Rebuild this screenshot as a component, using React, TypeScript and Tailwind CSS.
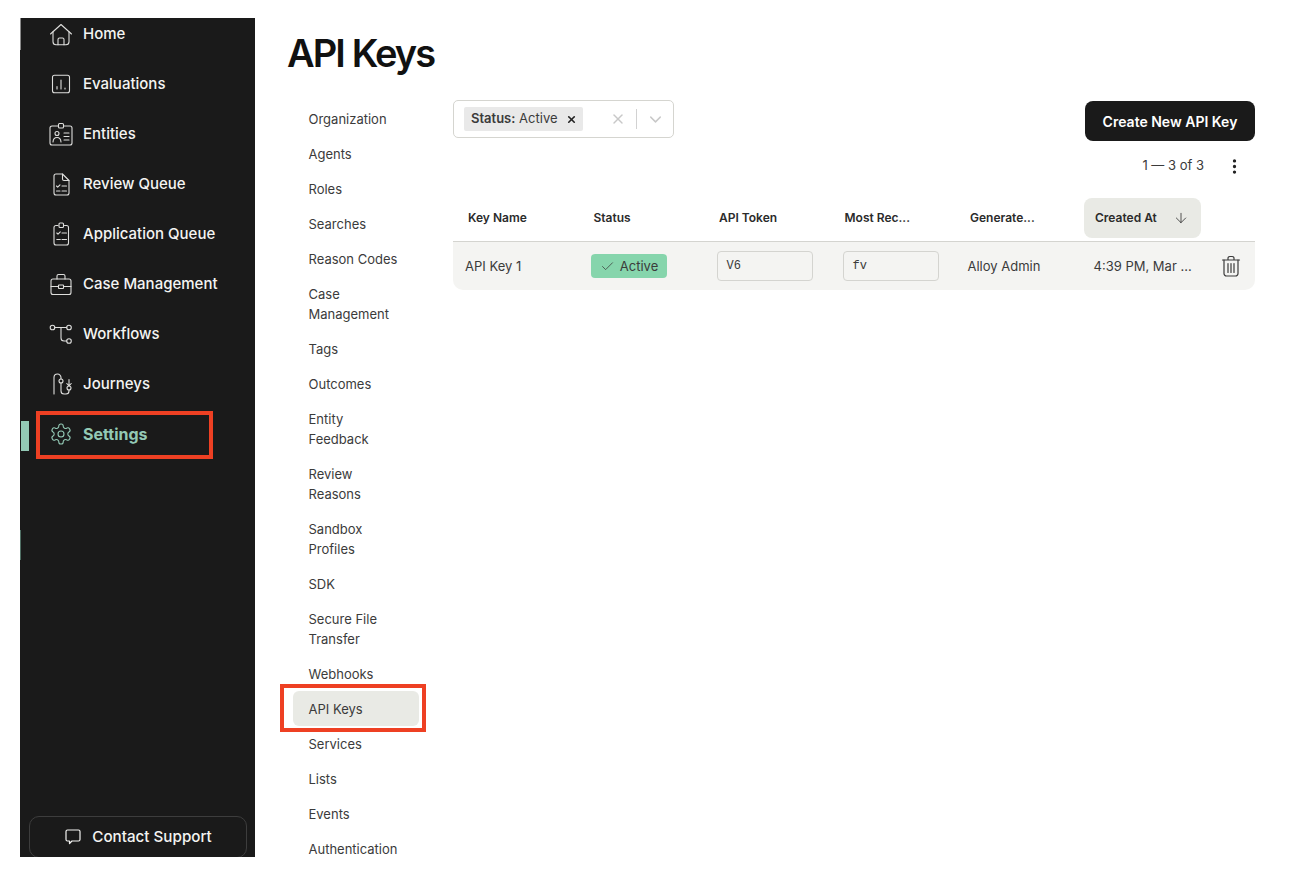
import React from 'react'
import { ArrowDown, Check, ChevronDown, MoreVertical, X } from 'lucide-react'

const Svg: React.FC<{ children: React.ReactNode; size?: number }> = ({ children, size = 24 }) => (
  <svg width={size} height={size} viewBox="0 0 24 24" fill="none" stroke="currentColor" strokeWidth={1.1} strokeLinecap="round" strokeLinejoin="round" className="shrink-0 opacity-90">
    {children}
  </svg>
)

const HomeIcon = () => (
  <Svg>
    <path d="M1.5 12 12 2.5 22.5 12" />
    <path d="M4 9.8v10a3 3 0 0 0 3 3h10a3 3 0 0 0 3-3v-10" />
    <path d="M9 22.8v-5.3a1.5 1.5 0 0 1 1.5-1.5h3a1.5 1.5 0 0 1 1.5 1.5v5.3" />
  </Svg>
)

const EvaluationsIcon = () => (
  <Svg>
    <rect x="3.5" y="3.2" width="17" height="17.6" rx="2" />
    <path d="M8 17v-2.5M12 17V8M16 17v-1" />
  </Svg>
)

const EntitiesIcon = () => (
  <Svg>
    <path d="M9 4H3a2 2 0 0 0-2 2v15a2 2 0 0 0 2 2h18a2 2 0 0 0 2-2V6a2 2 0 0 0-2-2h-6" />
    <rect x="9.5" y="1.5" width="5" height="4.5" rx="1" />
    <circle cx="8" cy="11.5" r="2" />
    <path d="M4 20c.2-3 1.8-4.5 4-4.5s3.8 1.500 4 4.500M15 11h5M15 14.500h5M15 18h5" />
  </Svg>
)

const ReviewIcon = () => (
  <Svg>
    <path d="M13.500 2H7a2 2 0 0 0-2 2v17a2 2 0 0 0 2 2h11a2 2 0 0 0 2-2V8.500z" />
    <path d="M13.500 2v5a1.500 1.500 0 0 0 1.500 1.500h5" />
    <path d="m7.500 14 1.200 1.200 2.300-2.400M13 14h4.500M7.500 19h3.500M13 19h4.500" />
  </Svg>
)

const ApplicationIcon = () => (
  <Svg>
    <path d="M9 3.500H7a2 2 0 0 0-2 2V21a2 2 0 0 0 2 2h10.500a2 2 0 0 0 2-2V5.500a2 2 0 0 0-2-2H15.500" />
    <rect x="10" y="1" width="4.500" height="4.500" rx="1" />
    <path d="m7.800 11 1.200 1.200 2.300-2.400M13 11h4.500M7.800 17.500h3.500M13 17.500h4.500" />
  </Svg>
)

const CaseIcon = () => (
  <Svg>
    <rect x="2" y="7" width="20" height="15.500" rx="2" />
    <path d="M8 7V4a1.500 1.500 0 0 1 1.500-1.500h5A1.500 1.500 0 0 1 16 4v3M2 14.500h7.500M14.500 14.500H22" />
    <rect x="9.500" y="13" width="5" height="3.500" rx=".5" />
  </Svg>
)

const WorkflowsIcon = () => (
  <Svg>
    <circle cx="3.500" cy="5.500" r="2.300" />
    <circle cx="20" cy="5.500" r="2.300" />
    <circle cx="20" cy="19" r="2.300" />
    <path d="M5.800 5.500h11.900M12 5.500V16a3 3 0 0 0 3 3h2.700" />
  </Svg>
)

const JourneysIcon = () => (
  <Svg>
    <path d="M5 22V5.500a3.500 3.500 0 0 1 7 0v1.500M12 11v8a3 3 0 0 0 3 3h2a3 3 0 0 0 3-3v-1" />
    <circle cx="12" cy="9" r="2" />
    <circle cx="20" cy="16" r="2" />
    <path d="M20 14V7.500M17.800 11.500 20 14l2.200-2.500" />
  </Svg>
)

const SettingsIcon = () => (
  <svg width="24" height="24" viewBox="0 0 24 24" fill="none" stroke="currentColor" strokeWidth={1.100} strokeLinecap="round" strokeLinejoin="round" className="shrink-0">
    <path d="M12.220 2h-.44a2 2 0 0 0-2 2v.180a2 2 0 0 1-1 1.730l-.43.250a2 2 0 0 1-2 0l-.150-.080a2 2 0 0 0-2.730.730l-.220.380a2 2 0 0 0 .730 2.730l.150.100a2 2 0 0 1 1 1.720v.510a2 2 0 0 1-1 1.740l-.150.090a2 2 0 0 0-.730 2.730l.220.380a2 2 0 0 0 2.730.730l.150-.080a2 2 0 0 1 2 0l.430.250a2 2 0 0 1 1 1.730V20a2 2 0 0 0 2 2h.440a2 2 0 0 0 2-2v-.180a2 2 0 0 1 1-1.730l.430-.250a2 2 0 0 1 2 0l.150.080a2 2 0 0 0 2.730-.730l.220-.390a2 2 0 0 0-.730-2.730l-.150-.080a2 2 0 0 1-1-1.740v-.500a2 2 0 0 1 1-1.740l.150-.090a2 2 0 0 0 .730-2.730l-.220-.380a2 2 0 0 0-2.730-.730l-.150.080a2 2 0 0 1-2 0l-.430-.250a2 2 0 0 1-1-1.730V4a2 2 0 0 0-2-2z" />
    <circle cx="12" cy="12" r="3" />
  </svg>
)

const TrashIcon = () => (
  <svg width="20" height="22" viewBox="0 0 20 22" fill="none" stroke="currentColor" strokeWidth={1.200} strokeLinecap="round" strokeLinejoin="round">
    <path d="M1.500 5h17M7 5V3.200A1.700 1.700 0 0 1 8.700 1.500h2.600A1.700 1.700 0 0 1 13 3.200V5" />
    <path d="M3 5v13.500A2.500 2.500 0 0 0 5.500 21h9a2.500 2.500 0 0 0 2.500-2.500V5" />
    <path d="M7 8.500v9M10 8.500v9M13 8.500v9" />
  </svg>
)

const navItems = [
  { label: 'Home', icon: <HomeIcon /> },
  { label: 'Evaluations', icon: <EvaluationsIcon /> },
  { label: 'Entities', icon: <EntitiesIcon /> },
  { label: 'Review Queue', icon: <ReviewIcon /> },
  { label: 'Application Queue', icon: <ApplicationIcon /> },
  { label: 'Case Management', icon: <CaseIcon /> },
  { label: 'Workflows', icon: <WorkflowsIcon /> },
  { label: 'Journeys', icon: <JourneysIcon /> },
]

const settingsItems = [
  'Organization', 'Agents', 'Roles', 'Searches', 'Reason Codes', 'Case Management', 'Tags', 'Outcomes',
  'Entity Feedback', 'Review Reasons', 'Sandbox Profiles', 'SDK', 'Secure File Transfer', 'Webhooks',
  'API Keys', 'Services', 'Lists', 'Events', 'Authentication',
]

const columns = ['Key Name', 'Status', 'API Token', 'Most Rec...', 'Generate...']

const Sidebar: React.FC = () => (
  <aside className="relative w-[235px] shrink-0 bg-[#1a1a1a] flex flex-col overflow-hidden">
    <div className="absolute left-0 top-0 w-[1px] h-[32px] bg-[#8a8a8a]" />
    <div className="absolute left-0 top-[512px] w-[1px] h-[30px] bg-[#4f6f64]" />
    <div className="absolute left-[1px] top-[403px] w-[8px] h-[30px] bg-[#93c9b5]" />
    <nav className="-mt-[9px] flex flex-col">
      {navItems.map((item) => (
        <div key={item.label} className="h-[50px] pl-[29px] flex items-center gap-[10px] text-[#f4f4f2] text-[15px] font-medium">
          {item.icon}
          <span>{item.label}</span>
        </div>
      ))}
      <div className="h-[50px] pl-[29px] flex items-center gap-[10px] text-[#93c9b5] text-[16px] font-bold">
        <SettingsIcon />
        <span>Settings</span>
      </div>
    </nav>
    <div className="mt-auto -mb-[1px] ml-[9px] mr-[8px] h-[42px] shrink-0 border border-[#3d3d3d] rounded-[10px] flex items-center justify-center gap-[10px] text-[#f4f4f2] text-[15.2px] font-medium">
      <svg width="18" height="18" viewBox="0 0 18 18" fill="none" stroke="currentColor" strokeWidth={1.200} strokeLinejoin="round">
        <path d="M3.500 2h11A1.500 1.500 0 0 1 16 3.500v8a1.500 1.500 0 0 1-1.500 1.500H8l-2.500 2.500V13h-2A1.500 1.500 0 0 1 2 11.500v-8A1.500 1.500 0 0 1 3.500 2z" />
      </svg>
      <span>Contact Support</span>
    </div>
  </aside>
)

const SettingsNav: React.FC = () => (
  <div className="w-[126px] shrink-0 ml-[6px] flex flex-col text-[13px] leading-[20px] text-[#3b3b3b]">
    {settingsItems.map((item) => (
      <div
        key={item}
        className={`relative px-[15.5px] py-[7.500px] rounded-[6px] ${item === 'API Keys' ? 'bg-[#e9eae5]' : ''}`}
      >
        {item}
        {item === 'API Keys' && (
          <div className="absolute -left-[13px] -right-[7px] -top-[7px] -bottom-[6px] border-[4px] border-[#ee4023]" />
        )}
      </div>
    ))}
  </div>
)

const ApiKeysTable: React.FC = () => (
  <div className="w-[802px] ml-[34px] -mt-[1px] shrink-0">
    <div className="flex justify-between items-start">
      <div className="w-[221px] h-[38px] border border-[#d5d5d0] rounded-[5px] flex items-center pl-[10px] pr-[8px]">
        <div className="h-[24px] pl-[7px] pr-[6px] bg-[#e9e9e9] rounded-[2px] flex items-center gap-[8px] text-[13px] text-[#3b3b3b]">
          <span><span className="font-semibold">Status:</span> Active</span>
          <X size={11} strokeWidth={3.500} className="text-[#222]" />
        </div>
        <X size={16} strokeWidth={2.200} className="ml-auto text-[#c8c8c8]" />
        <div className="w-[1px] h-[20px] bg-[#d2d2d2] ml-[10px] mr-[9px]" />
        <ChevronDown size={19} strokeWidth={1.800} className="text-[#c8c8c8]" />
      </div>
      <div className="flex flex-col items-end">
        <button className="w-[170px] h-[40px] mt-[1px] bg-[#1a1a1a] rounded-[8px] text-white text-[14px] font-semibold">Create New API Key</button>
        <div className="mt-[15px] h-[20px] flex items-center text-[13px] text-[#3b3b3b]">
          <span>1 — 3 of 3</span>
          <MoreVertical size={19} strokeWidth={2.200} className="ml-[21px] mr-[11px] text-[#222]" />
        </div>
      </div>
    </div>
    <div className="mt-[22px] h-[44px] flex items-start border-b border-[#d4d4d0] text-[12px] font-semibold text-[#2b2b2b]">
      {columns.map((col) => (
        <div key={col} className="w-[125.500px] h-[40px] pl-[15px] flex items-center">{col}</div>
      ))}
      <div className="w-[117px] h-[40px] ml-[3.500px] pl-[11px] pr-[12px] bg-[#e9eae5] rounded-[8px] flex items-center justify-between">
        <span>Created At</span>
        <ArrowDown size={16} strokeWidth={1.200} />
      </div>
    </div>
    <div className="h-[48px] bg-[#f4f4f2] rounded-b-[10px] flex items-center text-[13px] text-[#3b3b3b]">
      <div className="w-[125.500px] pl-[12px] pt-[1px]">API Key 1</div>
      <div className="w-[125.500px] pl-[12.500px]">
        <span className="w-[76px] h-[24px] pt-[1px] bg-[#86d5ac] rounded-[4px] flex items-center justify-center gap-[5px]">
          <Check size={15} strokeWidth={1.200} />
          Active
        </span>
      </div>
      <div className="w-[125.500px] pl-[12.500px]">
        <div className="w-[96px] h-[30px] border border-[#d4d4d0] rounded-[4px] pl-[9px] flex items-center font-['Liberation_Mono',monospace] text-[12px]">V6</div>
      </div>
      <div className="w-[125.500px] pl-[13px]">
        <div className="w-[96px] h-[30px] border border-[#d4d4d0] rounded-[4px] pl-[9px] flex items-center font-['Liberation_Mono',monospace] text-[12px]">fv</div>
      </div>
      <div className="w-[125.500px] pl-[12.500px] pt-[1px]">Alloy Admin</div>
      <div className="w-[127px] pl-[13px] pt-[1px] whitespace-nowrap">4:39 PM, Mar ...</div>
      <div className="text-[#3b3b3b] ml-[13px]"><TrashIcon /></div>
    </div>
  </div>
)

const App: React.FC = () => (
  <div className="relative h-[876px] w-[1298px] overflow-hidden bg-white pt-[18px] pb-[19px] pl-[20px] flex font-['Inter',sans-serif]">
    <Sidebar />
    {/* red callout around Settings */}
    <div className="absolute left-[36px] top-[411px] w-[177px] h-[48px] border-[4px] border-[#ee4023]" />
    <main className="flex-1 min-w-0 pl-[32px]">
      <h1 className="text-[38px] leading-[46px] font-semibold tracking-[-0.05em] text-[#111] mt-[12px]">API Keys</h1>
      <div className="flex mt-[25px]">
        <SettingsNav />
        <ApiKeysTable />
      </div>
    </main>
  </div>
)

export default App
